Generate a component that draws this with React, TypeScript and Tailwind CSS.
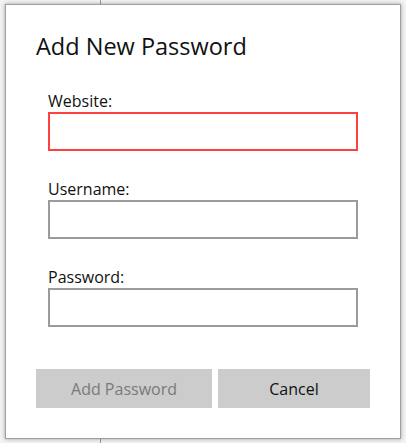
export default function App() {
  const fields = [
    { label: 'Website:', error: true },
    { label: 'Username:', error: false },
    { label: 'Password:', error: false },
  ];

  return (
    <div
      className="relative w-[406px] h-[443px] bg-[#f3f3f3] overflow-hidden"
      style={{ fontFamily: '"Open Sans", "Noto Sans", sans-serif' }}
    >
      {/* window behind the dialog */}
      <div className="absolute left-[100px] top-0 h-full w-px bg-[#9a9a9a]" />

      <div className="absolute left-[5px] top-[4px] w-[396px] h-[435px] bg-white border border-[#a0a0a0] shadow-[0_0_4px_rgba(0,0,0,0.35)] flex flex-col">
        <h1 className="ml-[30px] mt-[26px] text-[23.5px] leading-[30px] text-[#111]">
          Add New Password
        </h1>

        <div className="ml-[42px] mt-[30px] flex flex-col gap-[28px]">
          {fields.map((f) => (
            <div key={f.label} className="flex flex-col">
              <label className="text-[16px] leading-[20px] text-[#111] mb-[1px]">
                {f.label}
              </label>
              <div
                className={`w-[310px] h-[39px] border-2 bg-white ${
                  f.error ? 'border-[#ff4040]' : 'border-[#9b9b9b]'
                }`}
              />
            </div>
          ))}
        </div>

        <div className="ml-[30px] mt-[42px] flex gap-[6px]">
          <button className="w-[176px] h-[39px] bg-[#cccccc] text-[16px] text-[#7a7a7a]">
            Add Password
          </button>
          <button className="w-[152px] h-[39px] bg-[#cccccc] text-[16px] text-[#111]">
            Cancel
          </button>
        </div>
      </div>
    </div>
  );
}
